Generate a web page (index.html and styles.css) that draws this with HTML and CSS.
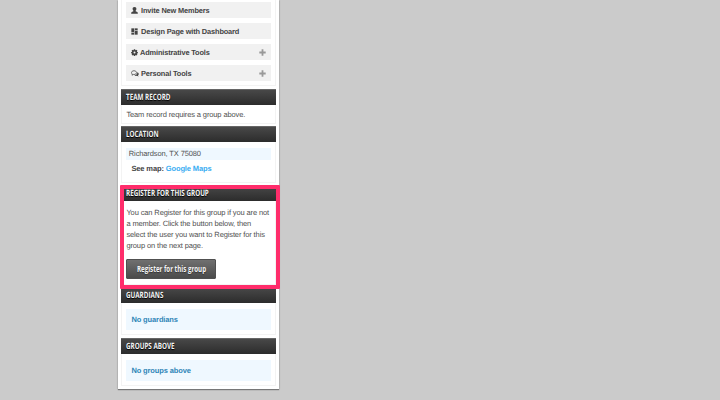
FILE: index.html
```
<!DOCTYPE html>
<html lang="en">
<head>
<meta charset="utf-8">
<title>Group</title>
<link rel="stylesheet" href="styles.css">
</head>
<body>
<aside class="panel">
  <section class="box tools">
    <a class="item"><svg class="icon" viewBox="0 0 14 14"><path d="M7 0C4.300 0 3 1.700 3.200 4c.1 1.500.9 2.800 1.600 3.500v1.200L1.500 10Q.3 10.500.3 13.500h13.400q0-3-1.200-3.500L9.200 8.700V7.500c.8-.7 1.500-2 1.600-3.500C11 1.700 9.700 0 7 0z"/></svg><span>Invite New Members</span></a>
    <a class="item"><svg class="icon" viewBox="0 0 14 14"><path d="M1 1h5v7H1zM8 1h5v3H8zM1 10h5v3H1zM8 6h5v7H8z"/><path d="M.5.500h13v13H.5z" opacity=".4"/></svg><span>Design Page with Dashboard</span></a>
    <a class="item gear"><svg class="icon" viewBox="0 0 14 14"><path fill-rule="evenodd" d="M5.700.500h2.600l.4 1.700 1 .4 1.500-.9 1.600 1.600-.9 1.500.4 1 1.500.4v2.300l-1.500.5-.4 1 .9 1.500-1.600 1.600-1.500-.9-1 .4-.4 1.500H5.700l-.4-1.500-1-.4-1.500.9-1.600-1.600.9-1.500-.4-1L.2 8.500V6.200l1.500-.4.4-1-.9-1.500 1.600-1.600 1.500.9 1-.4zM7 5.200a2 2 0 1 0 0 4 2 2 0 0 0 0-4z"/></svg><span>Administrative Tools</span><svg class="plus" viewBox="0 0 7 7"><path d="M2.600.300h1.800v2.300h2.300v1.800H4.400v2.300H2.600V4.400H.3V2.600h2.300z"/></svg></a>
    <a class="item"><svg class="icon chat" viewBox="0 0 16 14"><path d="M6 1.500c3 0 5 1.600 5 3.700S9 9 6 9l-1.400-.1L2 10.500l.6-2.400C1.500 7.400 1 6.300 1 5.200c0-2.100 2-3.700 5-3.700z" fill="none" stroke="#444" stroke-width="1.500"/><path d="M12.500 4.500c3.800 1.500 3.800 4.500 1.400 6.200l1.300 2.500-3.500-1.500c-2 .3-3.700-.1-4.900-1 3.600 0 6-2.300 5.700-6.200z"/></svg><span>Personal Tools</span><svg class="plus" viewBox="0 0 7 7"><path d="M2.600.300h1.800v2.300h2.300v1.800H4.400v2.300H2.600V4.400H.3V2.600h2.300z"/></svg></a>
  </section>
  <section class="box record">
    <h2><span>TEAM RECORD</span></h2>
    <p>Team record requires a group above.</p>
  </section>
  <section class="box location">
    <h2><span>LOCATION</span></h2>
    <div class="address">Richardson, TX 75080</div>
    <div class="map">See map: <a>Google Maps</a></div>
  </section>
  <section class="box register">
    <h2><span>REGISTER FOR THIS GROUP</span></h2>
    <p>You can Register for this group if you are not<br>a member. Click the button below, then<br>select the user you want to Register for this<br>group on the next page.</p>
    <button><span>Register for this group</span></button>
    <div class="highlight"></div>
  </section>
  <section class="box guardians">
    <h2><span>GUARDIANS</span></h2>
    <div class="notice">No guardians</div>
  </section>
  <section class="box above">
    <h2><span>GROUPS ABOVE</span></h2>
    <div class="notice">No groups above</div>
  </section>
</aside>
</body>
</html>
```
FILE: styles.css
```
* { box-sizing: border-box; }
body {
  margin: 0;
  height: 400px;
  overflow: hidden;
  background: #cbcbcb;
  font: 7.5px/11px "Liberation Sans", Arial, sans-serif;
  letter-spacing: -.12px;
  text-rendering: geometricPrecision;
  color: #505050;
}
p, h2 { margin: 0; }
.panel {
  width: 161px;
  height: 389px;
  margin-left: 118px;
  padding: 0 3px;
  background: #fff;
  box-shadow: 0 1px 1px #777, 0 0 2px #aaa;
}
.box {
  position: relative;
  border: solid #f3f3f3;
  border-width: 0 1px 1px;
  margin-bottom: 2px;
}
.tools { height: 86px; padding: 2px 4px 0; margin-bottom: 3px; }
.item {
  display: flex;
  align-items: center;
  height: 16px;
  margin-bottom: 5px;
  padding: 0 5px;
  background: #f1f1f1;
  color: #444;
  font-size: 7.4px;
  font-weight: bold;
  letter-spacing: -.14px;
}
.icon { width: 7px; height: 7px; margin-right: 3px; fill: #444; }
.gear .icon { margin-right: 2px; }
.item .chat { width: 8px; margin-right: 2px; }
.item span { padding-top: 1px; line-height: 11px; }
.plus { width: 7px; height: 7px; margin-left: auto; fill: #999; }
h2 {
  height: 16px;
  margin: 0 -1px;
  padding-left: 5.4px;
  border-top: 1px solid #666;
  background: linear-gradient(#484848, #2c2c2c);
  color: #f4f4f4;
  font: bold 8.6px/14px "Open Sans", sans-serif;
  letter-spacing: 0;
  text-shadow: 0 1px 1px #000;
}
h2 span, button span {
  display: inline-block;
  white-space: nowrap;
  transform: scaleX(.73);
  transform-origin: left;
}
.record { height: 35px; }
.box p { padding-left: 4.4px; white-space: nowrap; }
.record p { padding-top: 4px; }
.location { height: 57px; }
.address {
  height: 12px;
  margin: 6px 4px 0;
  padding-left: 2.8px;
  background: #eff8ff;
  line-height: 11px;
}
.map { margin: 3px 0 0 9.4px; color: #444; font-weight: bold; }
.map a { color: #39adf2; }
.register { height: 100px; }
.register p { padding-top: 6px; }
button {
  display: block;
  width: 90px;
  height: 20px;
  margin: 8px 0 0 4px;
  padding: 0 0 0 10px;
  border: 1px solid #505050;
  border-radius: 1px;
  background: linear-gradient(#707070, #4b4b4b);
  color: #f4f4f4;
  font: bold 8.6px/16px "Open Sans", sans-serif;
  text-align: left;
  text-shadow: 0 1px 1px #333;
}
button span { transform: scaleX(.72); }
.highlight {
  position: absolute;
  inset: 0 -5px -5px -2px;
  border: 4px solid #ff2d6b;
  border-radius: 1px;
  z-index: 1;
}
.guardians { height: 48px; margin-bottom: 3px; }
.above { height: 48px; margin: 0; }
.notice {
  height: 21px;
  margin: 6px 4px 0;
  padding-left: 5.4px;
  background: #eff8ff;
  color: #3086b8;
  font-weight: bold;
  line-height: 21px;
}
```
